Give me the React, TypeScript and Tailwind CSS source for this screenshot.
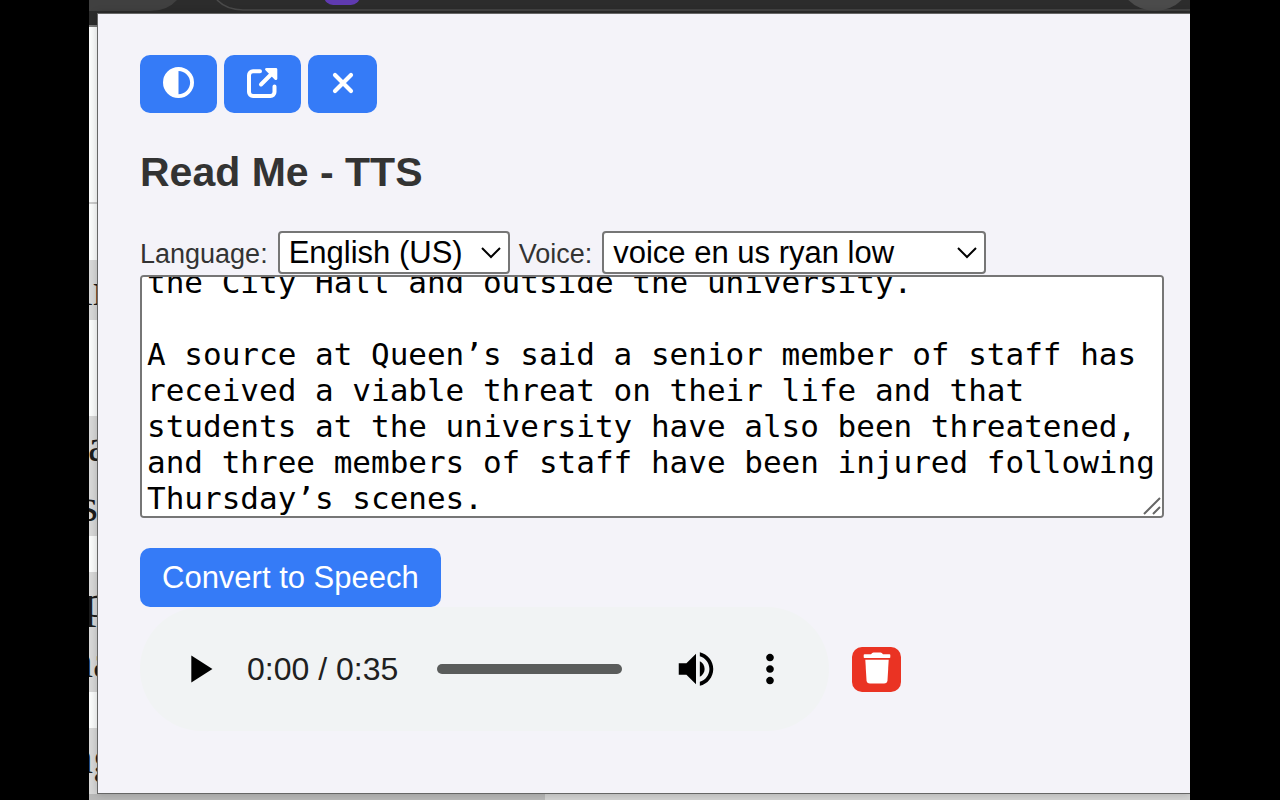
import { useEffect, useRef, useState } from "react";
import { FaCircleHalfStroke } from "react-icons/fa6";

const ARTICLE = `the City Hall and outside the university.

A source at Queen’s said a senior member of staff has received a viable threat on their life and that students at the university have also been threatened, and three members of staff have been injured following Thursday’s scenes.`;

const toolButton =
  "flex h-[58px] items-center justify-center rounded-[10px] bg-[#357bf7] pb-[3px] text-white";

function OpenIcon() {
  return (
    <svg width="34" height="34" viewBox="0 0 34 34" fill="none" aria-hidden="true">
      <path
        d="M14 5.2H7A4 4 0 0 0 3 9.2V26a4 4 0 0 0 4 4H24.500a4 4 0 0 0 4-4V20.5"
        stroke="currentColor"
        strokeWidth="4"
        strokeLinecap="round"
      />
      <path d="M15 18.5 27 6.500" stroke="currentColor" strokeWidth="4" strokeLinecap="round" />
      <path
        d="M20.500 3.300h9.400v9.400z"
        fill="currentColor"
        stroke="currentColor"
        strokeWidth="2.8"
        strokeLinejoin="round"
      />
    </svg>
  );
}

function CloseIcon() {
  return (
    <svg width="24" height="24" viewBox="0 0 24 24" fill="none" aria-hidden="true">
      <path d="M4 4l16 16M20 4L4 20" stroke="currentColor" strokeWidth="4.2" strokeLinecap="round" />
    </svg>
  );
}

function MediaIcon({ d }: { d: string }) {
  return (
    <svg width="46" height="46" viewBox="0 0 24 24" fill="currentColor" aria-hidden="true">
      <path d={d} />
    </svg>
  );
}

function TrashIcon() {
  return (
    <svg width="28" height="32" viewBox="0 0 28 32" fill="currentColor" aria-hidden="true">
      <path d="M1.5 2.2H8Q9 .4 10.500.4H17.500Q19 .4 20 2.2H26.500Q27.300 2.200 27.300 3V5.200Q27.300 6 26.500 6H1.500Q.700 6 .700 5.200V3Q.700 2.200 1.500 2.200Z" />
      <path d="M2.300 7.700H25.700L24.500 28.200Q24.200 31.400 21 31.400H7Q3.800 31.400 3.500 28.200Z" />
    </svg>
  );
}

function Select({ id, options, className }: { id: string; options: string[]; className: string }) {
  return (
    <span className="relative flex">
      <select
        id={id}
        className={`h-[43px] appearance-none rounded-[4px] border-2 border-[#767676] bg-white pl-[9px] text-[31px] leading-[38px] text-black ${className}`}
      >
        {options.map((o) => (
          <option key={o}>{o}</option>
        ))}
      </select>
      <svg
        className="pointer-events-none absolute right-2 top-[15px]"
        width="22"
        height="14"
        viewBox="0 0 22 14"
        fill="none"
        aria-hidden="true"
      >
        <path d="M2 2l9 9 9-9" stroke="#000" strokeWidth="2" />
      </svg>
    </span>
  );
}

function Backdrop() {
  return (
    <div
      aria-hidden="true"
      className="absolute inset-0 flex flex-col overflow-hidden bg-[#fbfcfc] font-['Liberation_Serif',serif] text-[46px] leading-[60px] text-[#1c1c1c]"
    >
      <div className="flex h-[27px] shrink-0 justify-between border-b-2 border-[#777] bg-[#2c2c2c]">
        <svg width="900" height="13" viewBox="0 0 900 13" fill="none">
          <path d="M0 0H88Q78 11 62 11H0Z" fill="#404040" />
          <path d="M128 0Q138 10 154 10H900" stroke="#4a4a4a" strokeWidth="1.6" />
          <rect x="235" y="-20" width="36" height="25" rx="9" fill="#5f3ab0" />
        </svg>
        <svg width="201" height="13" viewBox="0 0 201 13" fill="none">
          <path d="M0 10H201" stroke="#4a4a4a" strokeWidth="1.6" />
          <circle cx="166" cy="-27" r="38" fill="#4b4b4b" />
        </svg>
      </div>
      <div className="h-[177px] shrink-0 border-b-2 border-[#ccc]" />
      <div className="mt-[56px] w-2 shrink-0 overflow-hidden whitespace-nowrap bg-[#d8d8d8]">
        <div className="-ml-[9px]">ln</div>
      </div>
      <div className="mt-[96px] w-2 shrink-0 overflow-hidden whitespace-nowrap bg-[#d8d8d8]">
        <div className="-ml-px">a</div>
        <div className="-ml-[9px]">s</div>
      </div>
      <div className="mt-[36px] w-2 shrink-0 overflow-hidden whitespace-nowrap bg-[#d8d8d8]">
        <div className="-ml-[4px]">p</div>
        <div className="-ml-[19px]">na</div>
      </div>
      <div className="mt-[36px] w-2 grow overflow-hidden whitespace-nowrap bg-[#d8d8d8]">
        <div className="-ml-[19px]">ng</div>
      </div>
      <div className="flex h-[6px] shrink-0">
        <div className="w-[456px] bg-[#b8b8b8]" />
        <div className="grow bg-[#d2d2d2]" />
      </div>
    </div>
  );
}

export default function App() {
  const [text, setText] = useState(ARTICLE);
  const area = useRef<HTMLTextAreaElement>(null);

  useEffect(() => {
    if (area.current) area.current.scrollTop = area.current.scrollHeight;
  }, []);

  return (
    <div className="min-h-screen bg-black pl-[89px] pr-[90px] font-['Liberation_Sans',Arial,sans-serif]">
      <div className="relative min-h-screen pl-2 pt-[13px]">
        <Backdrop />
        <main className="relative border-y border-l border-[#666] bg-[#f4f3f9] pb-[62px] pl-[42px] pr-[26px] pt-[41px] shadow-[0_0_8px_rgba(0,0,0,0.2)]">
          <div className="flex gap-[7px]">
            <button type="button" aria-label="Toggle theme" className={`${toolButton} w-[77px]`}>
              <FaCircleHalfStroke size={31} />
            </button>
            <button type="button" aria-label="Open in new window" className={`${toolButton} w-[77px]`}>
              <OpenIcon />
            </button>
            <button type="button" aria-label="Close" className={`${toolButton} w-[69px]`}>
              <CloseIcon />
            </button>
          </div>

          <h1 className="mt-[35px] text-[41px] font-bold leading-[48px] text-[#333]">Read Me - TTS</h1>

          <div className="mt-[35px] flex items-baseline text-[27px] leading-[32px] text-[#333]">
            <label htmlFor="language" className="mr-[10px]">
              Language:
            </label>
            <Select id="language" options={["English (US)"]} className="w-[232px]" />
            <label htmlFor="voice" className="ml-[9px] mr-[10px]">
              Voice:
            </label>
            <Select id="voice" options={["voice en us ryan low"]} className="w-[384px]" />
          </div>

          <div className="relative mt-px">
            <textarea
              ref={area}
              aria-label="Text to read"
              spellCheck={false}
              value={text}
              onChange={(e) => setText(e.target.value)}
              className="block h-[243px] w-full resize-none overflow-y-auto rounded-[4px] border-2 border-[#767676] bg-white px-[5px] font-['DejaVu_Sans_Mono',monospace] text-[31px] leading-[36px] text-black [scrollbar-width:none]"
            />
            <svg
              className="pointer-events-none absolute bottom-[3px] right-[3px]"
              width="18"
              height="18"
              viewBox="0 0 18 18"
              fill="none"
              aria-hidden="true"
            >
              <path d="M1 17L17 1M10 17l7-7" stroke="#666" strokeWidth="2" />
            </svg>
          </div>

          <button
            type="button"
            className="mt-[30px] block h-[59px] rounded-[10px] bg-[#357bf7] px-[22px] text-[31px] leading-[36px] text-white"
          >
            Convert to Speech
          </button>

          <div className="flex items-center gap-[23px]">
            <div className="flex h-[124px] w-[689px] items-center rounded-full bg-[#f1f3f4] pl-9 text-black">
              <button type="button" aria-label="Play">
                <MediaIcon d="M8 5v14l11-7z" />
              </button>
              <span className="ml-[25px] w-[190px] text-[32px] leading-[38px] text-[#202020]">0:00 / 0:35</span>
              <input
                type="range"
                aria-label="Position"
                min={0}
                max={35}
                defaultValue={0}
                className="h-[10px] w-[185px] appearance-none rounded-full bg-[#5a5c5b] [&::-webkit-slider-thumb]:w-0 [&::-webkit-slider-thumb]:appearance-none"
              />
              <button type="button" aria-label="Mute" className="ml-[51px]">
                <MediaIcon d="M3 9v6h4l5 5V4L7 9H3zm13.5 3c0-1.770-1.020-3.290-2.500-4.030v8.050c1.480-.730 2.500-2.250 2.500-4.020zM14 3.230v2.060c2.890.860 5 3.540 5 6.710s-2.110 5.850-5 6.710v2.060c4.010-.910 7-4.490 7-8.770s-2.990-7.860-7-8.770z" />
              </button>
              <button type="button" aria-label="More options" className="ml-7">
                <MediaIcon d="M12 8c1.100 0 2-.900 2-2s-.900-2-2-2-2 .900-2 2 .900 2 2 2zm0 2c-1.100 0-2 .900-2 2s.900 2 2 2 2-.900 2-2-.900-2-2-2zm0 6c-1.100 0-2 .900-2 2s.900 2 2 2 2-.900 2-2-.900-2-2-2z" />
              </button>
            </div>
            <button
              type="button"
              aria-label="Delete recording"
              className="flex h-[45px] w-[49px] items-center justify-center rounded-[10px] bg-[#ea3323] pb-[3px] text-white"
            >
              <TrashIcon />
            </button>
          </div>
        </main>
      </div>
    </div>
  );
}
